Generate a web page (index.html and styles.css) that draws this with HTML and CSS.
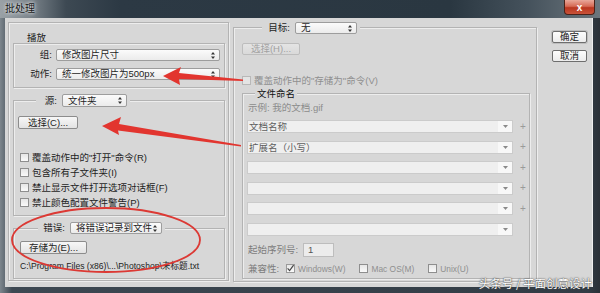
FILE: index.html
```html
<!DOCTYPE html>
<html lang="zh-CN">
<head>
    <meta charset="UTF-8">
    <title>批处理</title>
    <link rel="stylesheet" href="styles.css">
</head>
<body>
<div class="window">
    <div class="titlebar">
        <span class="title">批处理</span>
        <span class="close">x</span>
    </div>

    <div class="client">
        <!-- 左栏: 播放 / 源 / 错误 -->
        <div class="panel left-col">
            <div class="group-title">播放</div>
            <div class="box play-box">
                <div class="field">
                    <span class="lbl lbl-play">组:</span>
                    <span class="select play-select">修改图片尺寸<svg class="spin" width="4" height="7" viewBox="0 0 4 7"><path d="M2 0L4 2.6H0Z M0 4.4H4L2 7Z" fill="#333"/></svg></span>
                </div>
                <div class="field field-2">
                    <span class="lbl lbl-play">动作:</span>
                    <span class="select play-select">统一修改图片为500px<svg class="spin" width="4" height="7" viewBox="0 0 4 7"><path d="M2 0L4 2.6H0Z M0 4.4H4L2 7Z" fill="#333"/></svg></span>
                </div>
            </div>

            <div class="box source-box">
                <div class="legend legend-src">
                    <span class="lbl lbl-src">源:</span>
                    <span class="select src-select">文件夹<svg class="spin" width="4" height="7" viewBox="0 0 4 7"><path d="M2 0L4 2.6H0Z M0 4.4H4L2 7Z" fill="#333"/></svg></span>
                </div>
                <span class="btn btn-choose">选择(C)...</span>
                <div class="checks">
                    <div class="check"><span class="cb"></span>覆盖动作中的"打开"命令(R)</div>
                    <div class="check"><span class="cb"></span>包含所有子文件夹(I)</div>
                    <div class="check"><span class="cb"></span>禁止显示文件打开选项对话框(F)</div>
                    <div class="check"><span class="cb"></span>禁止颜色配置文件警告(P)</div>
                </div>
            </div>

            <div class="box error-box">
                <div class="legend legend-err">
                    <span class="lbl lbl-err">错误:</span>
                    <span class="select err-select">将错误记录到文件<svg class="spin" width="4" height="7" viewBox="0 0 4 7"><path d="M2 0L4 2.6H0Z M0 4.4H4L2 7Z" fill="#333"/></svg></span>
                </div>
                <span class="btn btn-save">存储为(E)...</span>
                <div class="path">C:\Program Files (x86)\...\Photoshop\未标题.txt</div>
            </div>
        </div>

        <!-- 中栏: 目标 -->
        <div class="panel mid-col">
            <div class="legend legend-dest">
                <span class="lbl lbl-dest">目标:</span>
                <span class="select dest-select">无<svg class="spin" width="4" height="7" viewBox="0 0 4 7"><path d="M2 0L4 2.6H0Z M0 4.4H4L2 7Z" fill="#333"/></svg></span>
            </div>
            <span class="btn btn-off">选择(H)...</span>
            <div class="check check-off"><span class="cb"></span>覆盖动作中的"存储为"命令(V)</div>

            <div class="box naming-box">
                <div class="legend legend-name">文件命名</div>
                <div class="sample">示例: 我的文档.gif</div>
                <div class="slots">
                    <div class="slot-row"><span class="slot"><span class="slot-text">文档名称</span><span class="slot-arrow"><svg width="5" height="3" viewBox="0 0 5 3"><path d="M0 0H5L2.5 3Z" fill="#8a8a8a"/></svg></span></span><span class="plus">+</span></div>
                    <div class="slot-row"><span class="slot"><span class="slot-text">扩展名（小写）</span><span class="slot-arrow"><svg width="5" height="3" viewBox="0 0 5 3"><path d="M0 0H5L2.5 3Z" fill="#8a8a8a"/></svg></span></span><span class="plus">+</span></div>
                    <div class="slot-row"><span class="slot"><span class="slot-text"></span><span class="slot-arrow"><svg width="5" height="3" viewBox="0 0 5 3"><path d="M0 0H5L2.5 3Z" fill="#8a8a8a"/></svg></span></span><span class="plus">+</span></div>
                    <div class="slot-row"><span class="slot"><span class="slot-text"></span><span class="slot-arrow"><svg width="5" height="3" viewBox="0 0 5 3"><path d="M0 0H5L2.5 3Z" fill="#8a8a8a"/></svg></span></span><span class="plus">+</span></div>
                    <div class="slot-row"><span class="slot"><span class="slot-text"></span><span class="slot-arrow"><svg width="5" height="3" viewBox="0 0 5 3"><path d="M0 0H5L2.5 3Z" fill="#8a8a8a"/></svg></span></span><span class="plus">+</span></div>
                    <div class="slot-row"><span class="slot"><span class="slot-text"></span><span class="slot-arrow"><svg width="5" height="3" viewBox="0 0 5 3"><path d="M0 0H5L2.5 3Z" fill="#8a8a8a"/></svg></span></span></div>
                </div>
                <div class="serial">
                    <span class="lbl-off">起始序列号:</span>
                    <span class="num">1</span>
                </div>
                <div class="compat">
                    <span class="lbl-off">兼容性:</span>
                    <span class="cb cb-on"><svg width="9" height="9" viewBox="0 0 9 9"><path d="M1.6 4.4L3.6 6.6L7.6 1.2" stroke="#444" stroke-width="1.2" fill="none"/></svg></span>
                    <span class="os os-win">Windows(W)</span>
                    <span class="cb"></span>
                    <span class="os os-mac">Mac OS(M)</span>
                    <span class="cb"></span>
                    <span class="os">Unix(U)</span>
                </div>
            </div>
        </div>

        <!-- 右栏: 按钮 -->
        <div class="right-col">
            <span class="btn btn-dlg btn-ok">确定</span>
            <span class="btn btn-dlg">取消</span>
        </div>
    </div>

    <!-- 红色标注 -->
    <svg class="marks" width="600" height="293" viewBox="0 0 600 293">
        <polygon points="163,76 181,67 179,73 243,79.5 243,81 179,79 180,85" fill="#e2352f"/>
        <polygon points="102,126 121,117 119,124 241,145 241,146.6 118,130.5 119,135" fill="#e2352f"/>
        <ellipse cx="106" cy="240" rx="94" ry="32" fill="none" stroke="#dc3934" stroke-width="1.8"/>
    </svg>

    <div class="watermark">头条号 / 平面创意设计</div>
</div>
</body>
</html>
```

FILE: styles.css
```css
/* Base */
* {
    box-sizing: border-box;
}
body {
    margin: 0;
    font-family: "Liberation Sans", "Noto Sans CJK SC", sans-serif;
    font-size: 9.5px;
    color: #1e1e1e;
}

/* Window frame */
.window {
    position: relative;
    width: 600px;
    height: 293px;
    overflow: hidden;
    background: linear-gradient(90deg, #7d868d 0, #3d4852 2%, #323c45 98%, #2a3037 100%);
}
.titlebar {
    height: 18px;
    display: flex;
    justify-content: space-between;
    align-items: flex-start;
    background: linear-gradient(90deg, #9aa1a6 0, #7b848b 5%, #3d4953 11%, #2c3944 20%, #2a3741 75%, #45525c 88%, #6c767d 100%);
}
.title {
    margin: 4px 0 0 5px;
    font-size: 10px;
    line-height: 10px;
    color: #1a1a1a;
    text-shadow: 0 0 3px #dfe3e6, 0 0 5px #dfe3e6;
}
.close {
    width: 31px;
    height: 15px;
    margin-right: 5px;
    display: flex;
    align-items: center;
    justify-content: center;
    color: #fff;
    font-weight: bold;
    font-size: 10px;
    border: 1px solid #4b2219;
    border-top: none;
    border-radius: 0 0 4px 4px;
    background: linear-gradient(#e9a89a 0, #d66a55 45%, #b9361f 55%, #c9533a 100%);
}
.client {
    margin: 0 7px 0 5px;
    height: 269px;
    background: #d7d7d7;
    display: flex;
    align-items: flex-start;
    padding: 4px 0 0 3px;
    border-right: 1px solid #eee;
}

/* Shared controls */
.panel, .box {
    border: 1px solid #b3b3b3;
    box-shadow: inset 1px 1px 0 #ededed, 1px 1px 0 #ededed;
}
.legend {
    display: flex;
    align-items: center;
    gap: 5px;
    width: max-content;
    background: #d7d7d7;
    padding: 0 3px;
}
.lbl {
    text-align: right;
    line-height: 12px;
}
.select {
    display: flex;
    align-items: center;
    justify-content: space-between;
    height: 12px;
    padding: 0 4px 0 5px;
    line-height: 10px;
    border: 1px solid #9d9d9d;
    border-radius: 2px;
    background: linear-gradient(#fbfbfb, #ebebeb);
}
.btn {
    display: flex;
    align-items: center;
    justify-content: center;
    height: 13px;
    line-height: 10px;
    border: 1px solid #8c8c8c;
    border-radius: 2px;
    background: linear-gradient(#f7f7f7, #e3e3e3);
}
.cb {
    display: inline-block;
    flex: none;
    width: 9px;
    height: 9px;
    border: 1px solid #8e8e8e;
    background: linear-gradient(#e6e6e6, #fafafa);
}
.cb svg {
    display: block;
    margin: -1px 0 0 -1px;
}
.check {
    display: flex;
    align-items: center;
    gap: 3px;
    height: 15px;
    line-height: 10px;
}

/* Left column */
.left-col {
    width: 221px;
    height: 259px;
    padding: 0 3px 0 4px;
}
.group-title {
    margin: 10px 0 0 14px;
    line-height: 9px;
    height: 9px;
}
.play-box {
    margin-top: 1px;
    height: 45px;
    padding-top: 5px;
}
.field {
    display: flex;
    align-items: center;
    gap: 4px;
    height: 12px;
}
.field-2 {
    margin-top: 7px;
}
.lbl-play {
    width: 38px;
}
.play-select {
    width: 164px;
}
.source-box {
    margin-top: 12px;
    height: 116px;
}
.legend-src {
    margin: -7px 0 0 22px;
}
.lbl-src {
    width: 18px;
}
.src-select {
    width: 65px;
    height: 13px;
}
.btn-choose {
    width: 60px;
    margin: 9px 0 0 4px;
}
.checks {
    margin: 21px 0 0 6px;
}
.error-box {
    margin-top: 12px;
    height: 51px;
}
.legend-err {
    margin: -7px 0 0 24px;
}
.lbl-err {
    width: 24px;
}
.err-select {
    width: 92px;
}
.btn-save {
    width: 67px;
    margin: 7px 0 0 6px;
}
.path {
    margin: 7px 0 0 6px;
    font-size: 8.6px;
    line-height: 10px;
    white-space: nowrap;
}

/* Middle column */
.mid-col {
    width: 304px;
    height: 255px;
    margin: 5px 0 0 4px;
    padding-left: 8px;
}
.legend-dest {
    margin: -6px 0 0 20px;
}
.lbl-dest {
    width: 25px;
}
.dest-select {
    width: 62px;
}
.btn-off {
    width: 58px;
    height: 12px;
    margin-top: 9px;
    color: #a2a2a2;
    border-color: #bdbdbd;
    background: linear-gradient(#e4e4e4, #d9d9d9);
}
.check-off {
    margin-top: 18px;
    color: #8f8f8f;
}
.check-off .cb {
    border-color: #b8b8b8;
    background: #e4e4e4;
}
.naming-box {
    width: 288px;
    height: 186px;
    margin-top: 5px;
    padding-left: 4px;
}
.legend-name {
    margin: -6px 0 0 8px;
    padding: 0 2px;
    line-height: 11px;
    height: 11px;
    color: #111;
}
.sample {
    margin: 4px 0 0 1px;
    line-height: 10px;
    color: #8c8c8c;
}
.slots {
    margin-top: 7px;
}
.slot-row {
    display: flex;
    align-items: center;
    height: 13px;
    margin-bottom: 7.6px;
}
.slot {
    display: flex;
    width: 266px;
    height: 13px;
    border: 1px solid #cbcbcb;
    background: #efefef;
}
.slot-text {
    flex: 1;
    padding-left: 1px;
    line-height: 11px;
    color: #5e5e5e;
}
.slot-arrow {
    width: 14px;
    display: flex;
    align-items: center;
    justify-content: center;
    background: #f8f8f8;
}
.plus {
    margin-left: 7px;
    color: #9a9a9a;
    font-size: 10px;
    line-height: 10px;
}
.serial {
    display: flex;
    align-items: center;
    gap: 4px;
    margin: -0.6px 0 0 1px;
    height: 14px;
}
.lbl-off {
    color: #7c7c7c;
    width: 51px;
    line-height: 10px;
}
.num {
    width: 31px;
    height: 14px;
    padding-left: 4px;
    line-height: 12px;
    border: 1px solid #bdbdbd;
    background: #ececec;
    color: #555;
}
.compat {
    display: flex;
    align-items: center;
    gap: 3px;
    margin: 7px 0 0 1px;
    height: 10px;
}
.compat .lbl-off {
    width: 35px;
}
.cb-on {
    border-color: #9a9a9a;
}
.os {
    font-size: 8.4px;
    color: #8f8f8f;
    line-height: 10px;
}
.os-win {
    margin-right: 11px;
}
.os-mac {
    margin-right: 11px;
}

/* Right column */
.right-col {
    display: flex;
    flex-direction: column;
    gap: 7px;
    margin: 9px 0 0 15px;
}
.btn-dlg {
    width: 35px;
    height: 12px;
    border-color: #6e6e6e;
    background: linear-gradient(#fdfdfd, #ececec);
}
.btn-ok {
    box-shadow: 0 0 0 1px #bdbdbd;
}

/* Overlay */
.marks {
    position: absolute;
    left: 0;
    top: 0;
    pointer-events: none;
}
.watermark {
    position: absolute;
    right: 8px;
    bottom: 4px;
    font-family: "Noto Sans CJK SC", sans-serif;
    font-size: 11.5px;
    line-height: 12px;
    color: #fff;
    text-shadow: 0 0 1px #333, 0 0 2px #555;
}
```
